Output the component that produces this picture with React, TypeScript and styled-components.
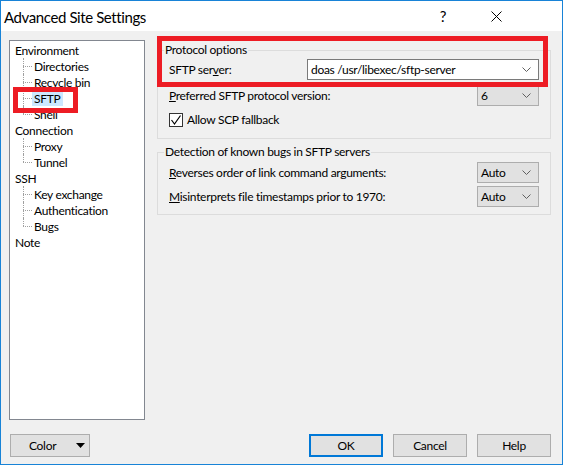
import React from "react";
import styled, { createGlobalStyle } from "styled-components";

const GlobalStyle = createGlobalStyle`
  html, body { margin: 0; padding: 0; background: #ffffff; }
  * { box-sizing: border-box; }
`;

const FONT = `Lato, "Noto Sans", "Liberation Sans", sans-serif`;

const Window = styled.div`
  position: relative;
  width: 563px;
  height: 465px;
  border: 1px solid #1883d7;
  background: #f0f0f0;
  display: flex;
  flex-direction: column;
  font-family: ${FONT};
  font-size: 12px;
  letter-spacing: -0.3px;
  color: #000;
`;

const TitleBar = styled.div`
  height: 30px;
  background: #fff;
  display: flex;
  align-items: center;
  padding-left: 3px;
  flex: none;
`;

const Title = styled.div`
  font-size: 15px;
  letter-spacing: -0.4px;
  flex: 1;
  padding-top: 2px;
`;

const TitleButton = styled.div<{ $mr?: number }>`
  width: 46px;
  height: 30px;
  margin-right: ${(p) => p.$mr ?? 0}px;
  display: flex;
  align-items: center;
  justify-content: center;
  font-size: 15px;
`;

const Body = styled.div`
  flex: 1;
  display: flex;
  flex-direction: column;
  padding: 9px 11px 7px 8px;
`;

const Main = styled.div`
  flex: 1;
  display: flex;
  gap: 12px;
`;

const Tree = styled.div`
  width: 136px;
  background: #fff;
  border: 1px solid #828790;
  padding: 1px 0 0 3px;
`;

const TreeRow = styled.div`
  height: 16px;
  display: flex;
  align-items: center;
  white-space: nowrap;
`;

const Gutter = styled.span<{ $last?: boolean }>`
  position: relative;
  width: 19px;
  height: 16px;
  flex: none;
  &::before {
    content: "";
    position: absolute;
    left: 10px;
    top: 0;
    height: ${(p) => (p.$last ? "8px" : "16px")};
    border-left: 1px dotted #a0a0a0;
  }
  &::after {
    content: "";
    position: absolute;
    left: 10px;
    top: 8px;
    width: 9px;
    border-top: 1px dotted #a0a0a0;
  }
`;

const TreeLabel = styled.span<{ $selected?: boolean }>`
  padding: 0 3px 0 2px;
  line-height: 15px;
  background: ${(p) => (p.$selected ? "#cce8ff" : "transparent")};
`;

const Panel = styled.div`
  flex: 1;
  display: flex;
  flex-direction: column;
  padding-top: 2px;
`;

const Group = styled.fieldset<{ $gapTop?: number; $padTop?: number; $padBottom?: number; $gap?: number }>`
  margin: ${(p) => p.$gapTop ?? 0}px 0 0 0;
  border: 1px solid #dcdcdc;
  padding: ${(p) => p.$padTop ?? 0}px 11px ${(p) => p.$padBottom ?? 0}px 11px;
  display: flex;
  flex-direction: column;
  gap: ${(p) => p.$gap ?? 4}px;
  min-width: 0;
`;

const Legend = styled.legend`
  padding: 0 1px;
  margin-left: -5px;
  line-height: 16px;
`;

const Row = styled.div`
  height: 21px;
  display: flex;
  align-items: center;
  justify-content: space-between;
`;

const Combo = styled.div<{ $wide?: boolean }>`
  width: ${(p) => (p.$wide ? 232 : 62)}px;
  height: 21px;
  border: 1px solid ${(p) => (p.$wide ? "#7a7a7a" : "#adadad")};
  background: ${(p) => (p.$wide ? "#ffffff" : "#e1e1e1")};
  display: flex;
  align-items: center;
  padding: 0 7px 0 3px;
`;

const ComboText = styled.span`
  flex: 1;
`;

const CheckRow = styled.label`
  display: flex;
  align-items: center;
  gap: 4px;
  height: 17px;
`;

const CheckBox = styled.span`
  width: 14px;
  height: 14px;
  border: 1px solid #333;
  background: #fff;
  display: flex;
  align-items: center;
  justify-content: center;
`;

const ButtonBar = styled.div`
  display: flex;
  align-items: center;
  gap: 10px;
  margin-top: 14px;
  height: 23px;
`;

const Button = styled.div<{ $default?: boolean; $w?: number }>`
  width: ${(p) => p.$w ?? 74}px;
  height: 23px;
  background: #e1e1e1;
  border: ${(p) => (p.$default ? "2px solid #0078d7" : "1px solid #adadad")};
  display: flex;
  align-items: center;
  justify-content: center;
`;

const ColorButton = styled(Button)`
  margin-left: 1px;
  margin-right: auto;
  justify-content: space-between;
  padding: 0 4px 0 18px;
`;

const Highlight = styled.div<{ $t?: number }>`
  position: absolute;
  border: ${(p) => p.$t ?? 5}px solid #ed1c24;
`;

const Chevron = () => (
  <svg width="9" height="5" viewBox="0 0 9 5">
    <polyline points="0.5,0.5 4.5,4.5 8.5,0.5" fill="none" stroke="#606060" strokeWidth="1" />
  </svg>
);

const U = styled.span`
  text-decoration: underline;
`;

const tree: { label: string; child?: boolean; last?: boolean; selected?: boolean }[] = [
  { label: "Environment" },
  { label: "Directories", child: true },
  { label: "Recycle bin", child: true },
  { label: "SFTP", child: true, selected: true },
  { label: "Shell", child: true, last: true },
  { label: "Connection" },
  { label: "Proxy", child: true },
  { label: "Tunnel", child: true, last: true },
  { label: "SSH" },
  { label: "Key exchange", child: true },
  { label: "Authentication", child: true },
  { label: "Bugs", child: true, last: true },
  { label: "Note" },
];

export default function App() {
  return (
    <>
      <GlobalStyle />
      <Window>
        <TitleBar>
          <Title>Advanced Site Settings</Title>
          <TitleButton $mr={7}>?</TitleButton>
          <TitleButton $mr={43}>
            <svg width="11" height="11" viewBox="0 0 11 11">
              <path d="M0.5 0.5 L10.5 10.5 M10.5 0.5 L0.5 10.5" stroke="#000" strokeWidth="1" />
            </svg>
          </TitleButton>
        </TitleBar>
        <Body>
          <Main>
            <Tree>
              {tree.map((t) => (
                <TreeRow key={t.label}>
                  {t.child && <Gutter $last={t.last} />}
                  <TreeLabel $selected={t.selected}>{t.label}</TreeLabel>
                </TreeRow>
              ))}
            </Tree>
            <Panel>
              <Group $padTop={1} $padBottom={10} $gap={5}>
                <Legend>Protocol options</Legend>
                <Row>
                  <span>
                    SFTP ser<U>v</U>er:
                  </span>
                  <Combo $wide>
                    <ComboText>doas /usr/libexec/sftp-server</ComboText>
                    <Chevron />
                  </Combo>
                </Row>
                <Row>
                  <span>
                    <U>P</U>referred SFTP protocol version:
                  </span>
                  <Combo>
                    <ComboText>6</ComboText>
                    <Chevron />
                  </Combo>
                </Row>
                <CheckRow>
                  <CheckBox>
                    <svg width="12" height="12" viewBox="0 0 12 12">
                      <polyline points="1.5,6 4.5,10 10.5,1.5" fill="none" stroke="#000" strokeWidth="1.2" />
                    </svg>
                  </CheckBox>
                  Allow SCP fallback
                </CheckRow>
              </Group>
              <Group $gapTop={5} $padTop={2} $padBottom={7} $gap={3}>
                <Legend>Detection of known bugs in SFTP servers</Legend>
                <Row>
                  <span>
                    <U>R</U>everses order of link command arguments:
                  </span>
                  <Combo>
                    <ComboText>Auto</ComboText>
                    <Chevron />
                  </Combo>
                </Row>
                <Row>
                  <span>
                    <U>M</U>isinterprets file timestamps prior to 1970:
                  </span>
                  <Combo>
                    <ComboText>Auto</ComboText>
                    <Chevron />
                  </Combo>
                </Row>
              </Group>
            </Panel>
          </Main>
          <ButtonBar>
            <ColorButton $w={80}>
              Color
              <svg width="9" height="5" viewBox="0 0 9 5">
                <polygon points="0,0 9,0 4.5,5" fill="#000" />
              </svg>
            </ColorButton>
            <Button $default>OK</Button>
            <Button>Cancel</Button>
            <Button>Help</Button>
          </ButtonBar>
        </Body>
        <Highlight style={{ left: 156, top: 35, width: 391, height: 51 }} />
        <Highlight $t={5} style={{ left: 12, top: 86, width: 65, height: 26 }} />
      </Window>
    </>
  );
}
